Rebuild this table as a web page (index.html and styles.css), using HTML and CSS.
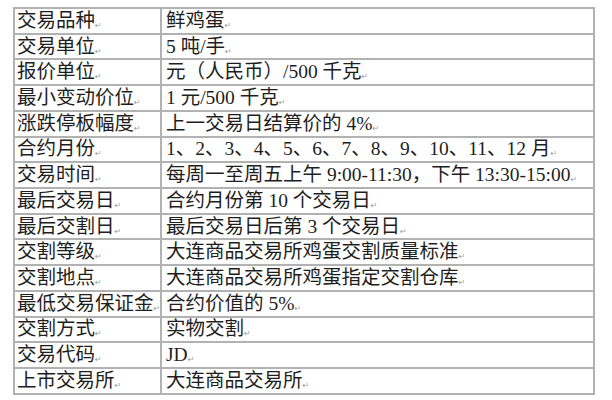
FILE: index.html
```html
<!DOCTYPE html>
<html lang="zh-CN">
<head>
<meta charset="utf-8">
<link rel="stylesheet" href="styles.css">
</head>
<body>
<div class="wrap">
<table class="spec">
<tbody>
<tr><td class="k">交易品种<span class="pm">↵</span></td><td class="v">鲜鸡蛋<span class="pm">↵</span></td></tr>
<tr><td class="k">交易单位<span class="pm">↵</span></td><td class="v">5 吨/手<span class="pm">↵</span></td></tr>
<tr><td class="k">报价单位<span class="pm">↵</span></td><td class="v">元（人民币）/500 千克<span class="pm">↵</span></td></tr>
<tr><td class="k">最小变动价位<span class="pm">↵</span></td><td class="v">1 元/500 千克<span class="pm">↵</span></td></tr>
<tr><td class="k">涨跌停板幅度<span class="pm">↵</span></td><td class="v">上一交易日结算价的 4%<span class="pm">↵</span></td></tr>
<tr><td class="k">合约月份<span class="pm">↵</span></td><td class="v">1、2、3、4、5、6、7、8、9、10、11、12 月<span class="pm">↵</span></td></tr>
<tr><td class="k">交易时间<span class="pm">↵</span></td><td class="v">每周一至周五上午 9:00-11:30，下午 13:30-15:00<span class="pm">↵</span></td></tr>
<tr><td class="k">最后交易日<span class="pm">↵</span></td><td class="v">合约月份第 10 个交易日<span class="pm">↵</span></td></tr>
<tr><td class="k">最后交割日<span class="pm">↵</span></td><td class="v">最后交易日后第 3 个交易日<span class="pm">↵</span></td></tr>
<tr><td class="k">交割等级<span class="pm">↵</span></td><td class="v">大连商品交易所鸡蛋交割质量标准<span class="pm">↵</span></td></tr>
<tr><td class="k">交割地点<span class="pm">↵</span></td><td class="v">大连商品交易所鸡蛋指定交割仓库<span class="pm">↵</span></td></tr>
<tr><td class="k">最低交易保证金<span class="pm">↵</span></td><td class="v">合约价值的 5%<span class="pm">↵</span></td></tr>
<tr><td class="k">交割方式<span class="pm">↵</span></td><td class="v">实物交割<span class="pm">↵</span></td></tr>
<tr><td class="k">交易代码<span class="pm">↵</span></td><td class="v">JD<span class="pm">↵</span></td></tr>
<tr><td class="k">上市交易所<span class="pm">↵</span></td><td class="v">大连商品交易所<span class="pm">↵</span></td></tr>
</tbody>
</table>
</div>
</body>
</html>
```
FILE: styles.css
```css
html, body {
  margin: 0;
  padding: 0;
  background: #ffffff;
}
.wrap {
  padding: 7px 0 0 13px;
}
.spec {
  border-collapse: collapse;
  width: 582px;
  height: 388px;
  table-layout: fixed;
  font-family: "Liberation Serif", "Noto Sans CJK SC", serif;
  font-size: 19.5px;
  color: #1e1e1e;
}
.spec td {
  border: 2px solid #b2b2b2;
  padding: 0 0 0 2px;
  line-height: 18px;
  white-space: nowrap;
  overflow: hidden;
  vertical-align: middle;
}
.spec td.k {
  width: 143px;
}
.spec td.v {
  padding-left: 4px;
}
.pm {
  font-family: "DejaVu Sans", sans-serif;
  font-size: 8px;
  line-height: 0;
  color: #9a9a9a;
  vertical-align: -1px;
}
```
